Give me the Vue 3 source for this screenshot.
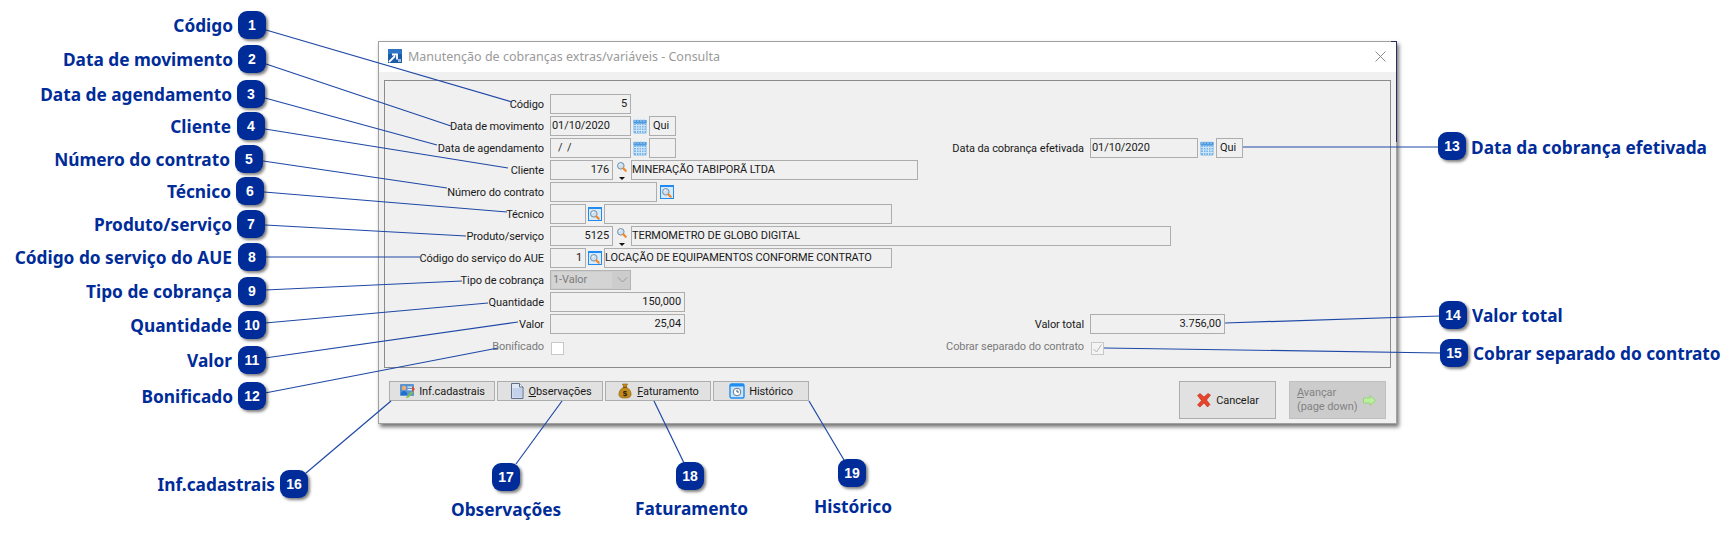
<script setup>
const marks = [
  { n: 1, text: 'Código', bx: 238, by: 11, rx: 233 },
  { n: 2, text: 'Data de movimento', bx: 238, by: 45, rx: 233 },
  { n: 3, text: 'Data de agendamento', bx: 237, by: 80, rx: 232 },
  { n: 4, text: 'Cliente', bx: 237, by: 112, rx: 231 },
  { n: 5, text: 'Número do contrato', bx: 235, by: 145, rx: 230 },
  { n: 6, text: 'Técnico', bx: 236, by: 177, rx: 231 },
  { n: 7, text: 'Produto/serviço', bx: 237, by: 210, rx: 232 },
  { n: 8, text: 'Código do serviço do AUE', bx: 238, by: 243, rx: 232 },
  { n: 9, text: 'Tipo de cobrança', bx: 238, by: 277, rx: 232 },
  { n: 10, text: 'Quantidade', bx: 238, by: 311, rx: 232 },
  { n: 11, text: 'Valor', bx: 238, by: 346, rx: 232 },
  { n: 12, text: 'Bonificado', bx: 238, by: 382, rx: 233 },
  { n: 13, text: 'Data da cobrança efetivada', bx: 1438, by: 132, lx: 1471, ly: 147 },
  { n: 14, text: 'Valor total', bx: 1439, by: 301, lx: 1472, ly: 315 },
  { n: 15, text: 'Cobrar separado do contrato', bx: 1440, by: 339, lx: 1473, ly: 353 },
  { n: 16, text: 'Inf.cadastrais', bx: 280, by: 470, rx: 275 },
  { n: 17, text: 'Observações', bx: 492, by: 463, lx: 451, ly: 509 },
  { n: 18, text: 'Faturamento', bx: 676, by: 462, lx: 635, ly: 508 },
  { n: 19, text: 'Histórico', bx: 838, by: 459, lx: 814, ly: 506 },
]

const lines = [
  [266, 30, 512, 102], [266, 64, 451, 126], [265, 98, 437, 145], [265, 129, 508, 168],
  [263, 161, 447, 188], [264, 192, 507, 212], [265, 225, 466, 236], [265, 257, 420, 257],
  [265, 290, 462, 281], [265, 323, 488, 303], [265, 358, 518, 322], [265, 393, 498, 348],
  [1243, 147, 1438, 147], [1225, 323, 1440, 316], [1104, 348, 1440, 353],
  [391, 401, 306, 473], [562, 401, 516, 464], [654, 401, 684, 463], [809, 401, 844, 460],
]

function labelStyle(m) {
  if (m.rx) return { right: 1735 - m.rx + 'px', top: m.by + 14 + 'px' }
  return { left: m.lx + 'px', top: m.ly + 'px' }
}
function badgeStyle(m) {
  return { left: m.bx + 'px', top: m.by + 'px' }
}
</script>

<template>
  <div class="canvas">
    <svg class="defs" width="0" height="0">
      <defs>
        <symbol id="cal" viewBox="0 0 14 15">
          <rect x="0.5" y="1" width="13" height="13.5" rx="1" fill="#76b4e8" />
          <rect x="0.5" y="1" width="13" height="3" fill="#4f9bde" />
          <path d="M2 0v3M5 0v3M8 0v3M11 0v3" stroke="#a5cff2" stroke-width="1" />
          <path d="M1 6.500h12M1 9h12M1 11.500h12M3.500 5v9M6 5v9M8.500 5v9M11 5v9" stroke="#cfe5f8" stroke-width="1" />
        </symbol>
        <symbol id="glass" viewBox="0 0 11 11">
          <circle cx="4.200" cy="4.200" r="3.600" fill="#cfe1f0" stroke="#6f8fa8" stroke-width="1.100" />
          <path d="M2.400 3.600a2 2 0 0 1 2-1.400" stroke="#fff" fill="none" />
          <path d="M7 7l2.600 2.600" stroke="#ee8a2c" stroke-width="2.400" stroke-linecap="round" />
        </symbol>
        <symbol id="logo" viewBox="0 0 14 14">
          <rect width="14" height="14" fill="#1d5aa8" />
          <rect y="0" width="14" height="5" fill="#2f74c4" />
          <path d="M1 13l6-6M4 5.500h5v5" stroke="#fff" stroke-width="1.800" fill="none" />
          <path d="M10 10h3v3h-3z" fill="#9dbbe0" />
        </symbol>
      </defs>
    </svg>

    <div class="dialog">
      <div class="titlebar">
        <svg class="logo"><use href="#logo" /></svg>
        <span class="title">Manutenção de cobranças extras/variáveis - Consulta</span>
        <svg class="close" viewBox="0 0 11 11"><path d="M0.500 0.500l10 10M10.500 0.500l-10 10" stroke="#8c8c8c" fill="none" /></svg>
      </div>

      <div class="panel">
        <div class="row">
          <label>Código</label>
          <div class="f w81 num">5</div>
        </div>
        <div class="row">
          <label>Data de movimento</label>
          <div class="f w81">01/10/2020</div>
          <svg class="cal"><use href="#cal" /></svg>
          <div class="f w27 day">Qui</div>
        </div>
        <div class="row">
          <label>Data de agendamento</label>
          <div class="f w81 blank-date">/ /</div>
          <svg class="cal"><use href="#cal" /></svg>
          <div class="f w27"></div>
          <div class="right">
            <label>Data da cobrança efetivada</label>
            <div class="f w108">01/10/2020</div>
            <svg class="cal"><use href="#cal" /></svg>
            <div class="f w27 day">Qui</div>
          </div>
        </div>
        <div class="row">
          <label>Cliente</label>
          <div class="f w63 num">176</div>
          <div class="pick"><svg class="glass"><use href="#glass" /></svg><i class="tri"></i></div>
          <div class="f w288x flush">MINERAÇÃO TABIPORÃ LTDA</div>
        </div>
        <div class="row">
          <label>Número do contrato</label>
          <div class="f w107"></div>
          <div class="lookup mid"><svg class="glass-in"><use href="#glass" /></svg></div>
        </div>
        <div class="row">
          <label>Técnico</label>
          <div class="f w36"></div>
          <div class="lookup"><svg class="glass-in"><use href="#glass" /></svg></div>
          <div class="f w288"></div>
        </div>
        <div class="row">
          <label>Produto/serviço</label>
          <div class="f w63 num">5125</div>
          <div class="pick"><svg class="glass"><use href="#glass" /></svg><i class="tri"></i></div>
          <div class="f w540 flush">TERMOMETRO DE GLOBO DIGITAL</div>
        </div>
        <div class="row">
          <label>Código do serviço do AUE</label>
          <div class="f w36 num">1</div>
          <div class="lookup"><svg class="glass-in"><use href="#glass" /></svg></div>
          <div class="f w288 flush">LOCAÇÃO DE EQUIPAMENTOS CONFORME CONTRATO</div>
        </div>
        <div class="row">
          <label>Tipo de cobrança</label>
          <div class="select">
            <span class="sel-text">1-Valor</span>
            <svg class="chev" viewBox="0 0 11 6"><path d="M1 0.500l4.500 4.500 4.500-4.500" stroke="#9a9a9a" fill="none" /></svg>
          </div>
        </div>
        <div class="row">
          <label>Quantidade</label>
          <div class="f w135 num">150,000</div>
        </div>
        <div class="row">
          <label>Valor</label>
          <div class="f w135 num">25,04</div>
          <div class="right">
            <label>Valor total</label>
            <div class="f w135 num">3.756,00</div>
          </div>
        </div>
        <div class="row">
          <label class="off">Bonificado</label>
          <div class="check"></div>
          <div class="right">
            <label class="off">Cobrar separado do contrato</label>
            <div class="check">
              <svg viewBox="0 0 11 11"><path d="M1.500 6l3 3 5-7.500" stroke="#b4b4b4" fill="none" /></svg>
            </div>
          </div>
        </div>
      </div>

      <div class="footer">
        <button class="tab">
          <svg class="tab-ic" viewBox="0 0 16 16">
            <rect x="1" y="1" width="14" height="12" rx="1" fill="#5b93d0" />
            <rect x="8.500" y="3.500" width="5" height="1.300" fill="#e8f0f8" />
            <rect x="8.500" y="6" width="5" height="1.300" fill="#e8f0f8" />
            <circle cx="5" cy="5" r="2.200" fill="#f0b070" />
            <path d="M1.800 12c0-3 1.400-4 3.200-4s3.200 1 3.200 4z" fill="#1f6fd0" />
            <path d="M7 15l1-2 5-5 1.500 1.500-5 5z" fill="#7cc04a" />
            <path d="M13 3l3 3-3 3z" fill="#e0452a" />
          </svg>
          <span>Inf.cadastrais</span>
        </button>
        <button class="tab">
          <svg class="tab-ic" viewBox="0 0 16 16">
            <path d="M2.500 0.500h8l3.500 3.500v11.500h-11.500z" fill="#dfe7f5" stroke="#5f6f8c" />
            <path d="M10.500 0.500v3.500h3.500" fill="#fff" stroke="#5f6f8c" />
            <rect x="3.500" y="5" width="9.500" height="9.500" fill="#c3d2ea" />
          </svg>
          <span><u>O</u>bservações</span>
        </button>
        <button class="tab">
          <svg class="tab-ic" viewBox="0 0 16 16">
            <path d="M5.500 1h5l-1.400 3.200c3 1.200 5 4 5 7 0 3-2.500 3.800-6.100 3.800s-6.100-.8-6.100-3.800c0-3 2-5.800 5-7z" fill="#c48a1c" stroke="#8a5c0c" stroke-width="0.600" />
            <path d="M6 4.300h4" stroke="#6d4708" />
            <text x="8" y="13" text-anchor="middle" class="dollar">$</text>
          </svg>
          <span><u>F</u>aturamento</span>
        </button>
        <button class="tab">
          <svg class="tab-ic" viewBox="0 0 16 16">
            <rect x="1" y="1" width="14" height="14" rx="1.500" fill="#cfe6fa" stroke="#1e8cf0" stroke-width="1.400" />
            <rect x="1" y="1" width="14" height="2.500" fill="#1e8cf0" />
            <circle cx="8" cy="9" r="3.800" fill="#fff" stroke="#607890" />
            <path d="M8 6.800v2.200h2" stroke="#405870" fill="none" />
          </svg>
          <span>Histórico</span>
        </button>
        <button class="action cancel">
          <svg class="x-ic" viewBox="0 0 16 16">
            <path d="M1.500 3.500l2.500-2 4 3.500 4-3.500 2.500 1.500-4 5 3.500 4.500-2.500 2.500-3.500-4-4 4-2.500-2 4-4.500z" fill="#e8442a" stroke="#b82d18" stroke-width="0.600" />
          </svg>
          <span>Cancelar</span>
        </button>
        <button class="action next">
          <span class="two"><u>A</u>vançar<br />(page down)</span>
          <svg class="arrow" viewBox="0 0 13 11"><path d="M0.500 3h6.500v-2.500l5.500 5-5.500 5v-2.500h-6.500z" fill="#b8f09c" stroke="#8fd070" stroke-width="0.800" /></svg>
        </button>
      </div>
    </div>

    <svg class="leaders" width="1735" height="538">
      <line v-for="(l, i) in lines" :key="i" :x1="l[0]" :y1="l[1]" :x2="l[2]" :y2="l[3]" />
    </svg>

    <template v-for="m in marks" :key="m.n">
      <div class="badge" :style="badgeStyle(m)">{{ m.n }}</div>
      <div class="callout" :style="labelStyle(m)">{{ m.text }}</div>
    </template>
  </div>
</template>

<style>
html, body { margin: 0; background: #fff; }
</style>

<style scoped>
.canvas {
  position: relative;
  width: 1735px;
  height: 538px;
  overflow: hidden;
  background: #fff;
  font-family: Roboto, "Noto Sans", "Liberation Sans", sans-serif;
  font-size: 11px;
  letter-spacing: -0.08px;
  color: #1a1a1a;
}
.defs { position: absolute; }

.dialog {
  position: absolute;
  left: 378px;
  top: 41px;
  width: 1019px;
  height: 383px;
  box-sizing: border-box;
  border: 1px solid #a0a0a0;
  background: #f0f0f0;
  box-shadow: 2px 3px 4px rgba(0, 0, 0, 0.55);
  display: flex;
  flex-direction: column;
}
.dialog::after {
  content: "";
  position: absolute;
  right: -1px;
  top: -1px;
  width: 6px;
  height: 101px;
  box-sizing: border-box;
  border-top: 1px solid #2a2a6a;
  border-right: 1px solid #2a2a6a;
}
.titlebar {
  height: 30px;
  background: #fff;
  display: flex;
  align-items: center;
  padding: 0 10px 2px 9px;
  box-sizing: border-box;
  flex: none;
}
.logo { width: 14px; height: 14px; flex: none; }
.title {
  margin-left: 6px;
  color: #9a9a9a;
  font-family: "Noto Sans", sans-serif;
  font-size: 12.5px;
  letter-spacing: 0;
  flex: 1;
}
.close { width: 11px; height: 11px; }

.panel {
  margin: 8px 5px 0 5px;
  height: 288px;
  flex: none;
  box-sizing: border-box;
  border: 1px solid #8c8c8c;
  padding-top: 13px;
  display: flex;
  flex-direction: column;
  gap: 2px;
}
.row {
  display: flex;
  align-items: center;
  height: 20px;
  flex: none;
}
.row > label {
  width: 159px;
  margin-right: 6px;
  text-align: right;
  white-space: nowrap;
  flex: none;
}
label.off { color: #7a7a7a; }

.f {
  height: 20px;
  line-height: 18px;
  box-sizing: border-box;
  border: 1px solid #adadad;
  background: #f0f0f0;
  padding: 0 1px;
  white-space: nowrap;
  overflow: hidden;
  flex: none;
}
.num { text-align: right; padding-right: 3px; }
.day { padding-left: 3px; }
.blank-date { padding-left: 7px; word-spacing: 2px; }
.flush { padding-left: 0; }
.w27 { width: 27px; }
.w36 { width: 36px; }
.w63 { width: 63px; }
.w81 { width: 81px; }
.w107 { width: 107px; }
.w108 { width: 108px; }
.w135 { width: 135px; }
.w288 { width: 288px; }
.w288x { width: 287px; }
.w540 { width: 540px; }

.cal { width: 14px; height: 15px; margin: 0 2px; flex: none; }
.pick {
  width: 18px;
  height: 20px;
  flex: none;
  position: relative;
}
.glass { position: absolute; left: 4px; top: 2px; width: 10px; height: 10px; }
.tri {
  position: absolute;
  left: 6px;
  top: 17px;
  border-left: 3px solid transparent;
  border-right: 3px solid transparent;
  border-top: 3px solid #111;
}
.lookup {
  width: 14px;
  height: 14px;
  margin: 0 2px;
  flex: none;
  box-sizing: border-box;
  border: 1px solid #1e8cf0;
  border-top-width: 2px;
  background: #dbeafa;
  display: flex;
  align-items: center;
  justify-content: center;
}
.lookup.mid { margin-left: 3px; }
.glass-in { width: 10px; height: 10px; }

.select {
  width: 81px;
  height: 20px;
  box-sizing: border-box;
  border: 1px solid #b4b4b4;
  background: #cccccc;
  display: flex;
  align-items: center;
  padding: 1px;
  flex: none;
}
.sel-text {
  width: 59px;
  height: 16px;
  line-height: 15px;
  background: #d4d4d4;
  color: #7d7d7d;
  padding-left: 1px;
}
.chev { width: 11px; height: 6px; margin-left: 5px; }

.check {
  width: 13px;
  height: 13px;
  box-sizing: border-box;
  border: 1px solid #c8c8c8;
  background: #fff;
  margin-left: 1px;
  margin-top: 4px;
  flex: none;
}
.right .check { background: #f4f4f4; }
.check svg { display: block; width: 11px; height: 11px; }

.right {
  margin-left: auto;
  width: 455px;
  display: flex;
  align-items: center;
}
.right > label {
  width: 149px;
  margin-right: 6px;
  text-align: right;
  white-space: nowrap;
  flex: none;
}

.footer {
  margin: 13px 10px 0 10px;
  display: flex;
  align-items: flex-start;
  gap: 2px;
}
.tab {
  width: 106px;
  height: 20px;
  box-sizing: border-box;
  border: 1px solid #adadad;
  background: #e1e1e1;
  padding: 0;
  font: inherit;
  letter-spacing: inherit;
  color: #1a1a1a;
  display: flex;
  align-items: center;
  justify-content: center;
  gap: 4px;
  flex: none;
}
.tab:nth-child(4) { width: 96px; }
.tab-ic { width: 16px; height: 16px; flex: none; }
.dollar { font: bold 8px "Liberation Sans", sans-serif; fill: #1a1a1a; }

.action {
  width: 97px;
  height: 38px;
  box-sizing: border-box;
  border: 1px solid #adadad;
  background: #e1e1e1;
  padding: 0;
  font: inherit;
  letter-spacing: inherit;
  color: #1a1a1a;
  display: flex;
  align-items: center;
  justify-content: center;
  flex: none;
}
.cancel { margin-left: auto; gap: 4px; }
.next {
  margin-left: 11px;
  background: #cccccc;
  border-color: #c0c0c0;
  color: #838383;
  gap: 6px;
  justify-content: flex-start;
  padding-left: 7px;
}
.two { text-align: left; line-height: 14px; white-space: nowrap; width: 60px; }
.x-ic { width: 16px; height: 16px; flex: none; }
.arrow { width: 13px; height: 11px; flex: none; }

.leaders { position: absolute; left: 0; top: 0; pointer-events: none; }
.leaders line { stroke: #1f48a6; stroke-width: 1.2; }

.badge {
  position: absolute;
  width: 28px;
  height: 28px;
  border-radius: 9px;
  background: #002c99;
  color: #fff;
  letter-spacing: 0;
  text-align: center;
  font: bold 14px/28px "Liberation Sans", sans-serif;
  box-shadow: 2px 2px 3px rgba(0, 0, 0, 0.5);
}
.callout {
  position: absolute;
  margin-top: 1px;
  transform: translateY(-50%);
  white-space: nowrap;
  color: #002c99;
  font-family: "Noto Sans", sans-serif;
  font-size: 17.3px;
  letter-spacing: 0;
  font-weight: 700;
  line-height: 24px;
}
</style>
